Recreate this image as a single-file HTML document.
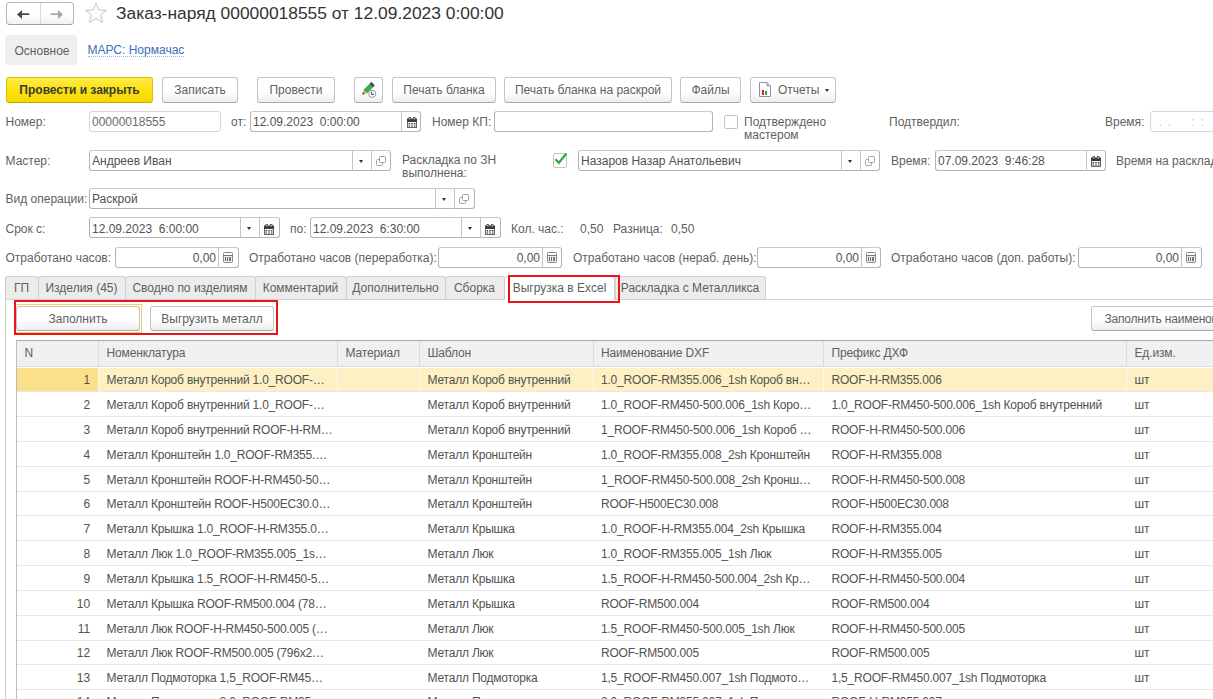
<!DOCTYPE html><html><head><meta charset="utf-8"><style>
html,body{margin:0;padding:0;}
body{width:1213px;height:699px;overflow:hidden;position:relative;background:#fff;font-family:"Liberation Sans",sans-serif;font-size:12px;color:#333;}
.a{position:absolute;box-sizing:border-box;}
.t{position:absolute;white-space:nowrap;line-height:14px;font-size:12px;}
.fld{border:1px solid #b3b3b3;border-top-color:#c8c8c8;border-radius:3px;background:#fff;}
.fldl{border:1px solid #d6d6d6;border-radius:3px;background:#fff;}
.dv{width:1px;background:#c4c4c4;}
.dd{width:0;height:0;border-left:2.5px solid transparent;border-right:2.5px solid transparent;border-top:3px solid #333;}
.btn{border:1px solid #c4c4c4;border-bottom-color:#a9a9a9;border-radius:3px;background:linear-gradient(#fff 0%,#fff 55%,#ededed 100%);}
.tab{border:1px solid #cfcfcf;border-bottom:none;border-radius:3px 3px 0 0;background:#ececec;}
.c{text-align:center;}
</style></head><body>

<div class="a" style="left:6px;top:2px;width:68px;height:23px;border:1px solid #b9b9b9;border-bottom-color:#9f9f9f;border-radius:4px;background:linear-gradient(#fff 0%,#fff 50%,#f1f1f1 100%);"></div>
<div class="a" style="left:40px;top:3px;width:1px;height:21px;background:#d9d9d9;"></div>
<svg class="a" style="left:16px;top:8.5px" width="14" height="11" viewBox="0 0 14 11"><path d="M1 5.5 L6 1 V4.3 H12.5 a0.9 0.9 0 0 1 0 1.8 H6 V10 Z" fill="#4a4a52"/></svg>
<svg class="a" style="left:50px;top:8.5px" width="14" height="11" viewBox="0 0 14 11"><path d="M13 5.5 L8 1 V4.3 H1.5 a0.9 0.9 0 0 0 0 1.8 H8 V10 Z" fill="#a8a8a8"/></svg>
<svg class="a" style="left:84px;top:2.4px" width="24" height="22" viewBox="0 0 24 22"><path d="M12 1 L14.9 8.1 L22.5 8.3 L16.6 13 L18.8 20.5 L12 16.3 L5.2 20.5 L7.4 13 L1.5 8.3 L9.1 8.1 Z" fill="#fff" stroke="#c4c4c4" stroke-width="1"/></svg>
<div class="t" style="left:116px;top:2.4px;line-height:22px;font-size:17.4px;color:#333">Заказ-наряд 00000018555 от 12.09.2023 0:00:00</div>
<div class="a" style="left:5px;top:35px;width:72px;height:30px;background:#efefef;border-radius:4px;"></div>
<div class="t" style="left:14.5px;top:44px;color:#5f5f5f;">Основное</div>
<div class="t" style="left:87.5px;top:44px;color:#3d6eb8;border-bottom:1px dotted #9db8e0;line-height:12px;">МАРС: Нормачас</div>
<div class="a" style="left:6px;top:77px;width:147px;height:26px;border:1px solid #dcc000;border-bottom-color:#c9a800;border-radius:3px;background:linear-gradient(#ffea50 0%,#fde20a 50%,#f6d800 100%);"></div>
<div class="t c" style="left:6px;width:147px;top:83px;font-weight:bold;color:#3a3a3a">Провести и закрыть</div>
<div class="a btn" style="left:162px;top:77px;width:76px;height:26px;"></div>
<div class="t c" style="left:162px;width:76px;top:83px;color:#5f5f5f">Записать</div>
<div class="a btn" style="left:257px;top:77px;width:78px;height:26px;"></div>
<div class="t c" style="left:257px;width:78px;top:83px;color:#5f5f5f">Провести</div>
<div class="a btn" style="left:354px;top:77px;width:29px;height:26px;"></div>
<div class="t c" style="left:354px;width:29px;top:83px;color:#5f5f5f"></div>
<svg class="a" style="left:354px;top:77px" width="30" height="25" viewBox="0 0 30 25"><path d="M8.2 17.6 L9.63 12.63 L13.17 16.17 Z" fill="#e3a860"/><path d="M8.2 17.6 L8.9 15.2 L10.6 16.9 Z" fill="#333"/><path d="M9.63 12.63 L15.27 6.99 L18.81 10.53 L13.17 16.17 Z" fill="#2fb24a"/><path d="M15.27 6.99 L17.39 4.87 L20.93 8.41 L18.81 10.53 Z" fill="#4a4a55"/><circle cx="18.2" cy="16.8" r="3.6" fill="#fff" stroke="#8f9bbd" stroke-width="1"/><path d="M17.6 14.6 V17.4 H20" fill="none" stroke="#444" stroke-width="1"/></svg>
<div class="a btn" style="left:392px;top:77px;width:104px;height:26px;"></div>
<div class="t c" style="left:392px;width:104px;top:83px;color:#5f5f5f">Печать бланка</div>
<div class="a btn" style="left:504px;top:77px;width:168px;height:26px;"></div>
<div class="t c" style="left:504px;width:168px;top:83px;color:#5f5f5f">Печать бланка на раскрой</div>
<div class="a btn" style="left:680px;top:77px;width:61px;height:26px;"></div>
<div class="t c" style="left:680px;width:61px;top:83px;color:#5f5f5f">Файлы</div>
<div class="a btn" style="left:750px;top:77px;width:86px;height:26px;"></div>
<div class="t c" style="left:750px;width:86px;top:83px;color:#5f5f5f"></div>
<div class="t" style="left:778px;top:83px;color:#5f5f5f">Отчеты</div>
<svg class="a" style="left:759px;top:82px" width="12" height="15" viewBox="0 0 12 15"><path d="M0.5 0.5 H8 L11.5 4 V14.5 H0.5 Z" fill="#fff" stroke="#8a8fb0" stroke-width="1"/><path d="M8 0.5 V4 H11.5" fill="#b8c0e0" stroke="#8a8fb0" stroke-width="0.8"/><rect x="3" y="8" width="2" height="5" fill="#e02020"/><rect x="6" y="9" width="2" height="4" fill="#30a040"/></svg>
<div class="a dd" style="left:824.5px;top:89px"></div>
<div class="t" style="left:5.5px;top:115px;color:#5f5f5f;">Номер:</div>
<div class="a fldl" style="left:89px;top:111px;width:132px;height:21px"></div>
<div class="t" style="left:92px;top:115px;color:#6a6a6a;">00000018555</div>
<div class="t" style="left:231px;top:115px;color:#5f5f5f;">от:</div>
<div class="a fld" style="left:250px;top:111px;width:171px;height:21px"></div>
<div class="a dv" style="left:401px;top:111px;height:21px"></div>
<div class="t" style="left:253px;top:115px;color:#525252;">12.09.2023&nbsp; 0:00:00</div>
<svg class="a" style="left:407px;top:116.5px" width="10" height="11" viewBox="0 0 10 11"><rect x="0.5" y="2.5" width="9" height="8" fill="#fff" stroke="#666" stroke-width="1"/><rect x="0" y="1.5" width="10" height="3.5" fill="#3b3b45"/><rect x="2" y="0.3" width="1.6" height="2.6" fill="#fff" stroke="#3b3b45" stroke-width="0.7"/><rect x="6.4" y="0.3" width="1.6" height="2.6" fill="#fff" stroke="#3b3b45" stroke-width="0.7"/><rect x="1.5" y="6" width="1.6" height="1.5" fill="#444"/><rect x="4.2" y="6" width="1.6" height="1.5" fill="#444"/><rect x="6.9" y="6" width="1.6" height="1.5" fill="#444"/><rect x="1.5" y="8.3" width="1.6" height="1.5" fill="#666"/><rect x="4.2" y="8.3" width="1.6" height="1.5" fill="#666"/><rect x="6.9" y="8.3" width="1.6" height="1.5" fill="#666"/></svg>
<div class="t" style="left:432px;top:115px;color:#5f5f5f;">Номер КП:</div>
<div class="a fld" style="left:494px;top:111px;width:219px;height:21px"></div>
<div class="a" style="left:724px;top:115px;width:14px;height:14px;border:1px solid #c4c4c4;border-radius:2px;background:#fff;"></div>
<div class="t" style="left:744px;top:116px;line-height:12.5px;color:#5f5f5f">Подтверждено<br>мастером</div>
<div class="t" style="left:889px;top:115px;color:#5f5f5f;">Подтвердил:</div>
<div class="t" style="left:1105px;top:115px;color:#5f5f5f;">Время:</div>
<div class="a fldl" style="left:1150px;top:111px;width:90px;height:21px"></div>
<div class="t" style="left:1158.5px;top:115px;color:#c4c4c4">.</div>
<div class="t" style="left:1167.5px;top:115px;color:#c4c4c4">.</div>
<div class="t" style="left:1191.5px;top:115px;color:#c4c4c4">:</div>
<div class="t" style="left:1200.5px;top:115px;color:#c4c4c4">:</div>
<div class="t" style="left:5.5px;top:154px;color:#5f5f5f;">Мастер:</div>
<div class="a fld" style="left:89px;top:150px;width:302px;height:21px"></div>
<div class="a dv" style="left:352px;top:150px;height:21px"></div>
<div class="a dv" style="left:371px;top:150px;height:21px"></div>
<div class="t" style="left:92px;top:154px;color:#525252;">Андреев Иван</div>
<div class="a dd" style="left:359.0px;top:159.5px"></div>
<svg class="a" style="left:376px;top:156px" width="10" height="10" viewBox="0 0 10 10"><path d="M3.5 3.5 H1.5 a1 1 0 0 0 -1 1 V8.5 a1 1 0 0 0 1 1 H5.5 a1 1 0 0 0 1 -1 V6.5" fill="none" stroke="#a0a0a0" stroke-width="1"/><rect x="3.5" y="0.5" width="6" height="6" rx="1" fill="#fff" stroke="#a0a0a0" stroke-width="1"/></svg>
<div class="t" style="left:402px;top:154px;line-height:12.5px;color:#5f5f5f">Раскладка по ЗН<br>выполнена:</div>
<div class="a" style="left:553px;top:153px;width:14px;height:15px;border:1px solid #c4c4c4;border-radius:2px;background:#fff;"></div>
<svg class="a" style="left:554px;top:151px" width="14" height="15" viewBox="0 0 14 15"><path d="M1.4 8.2 L4.9 11.7 L12.4 2.6" fill="none" stroke="#2ea84a" stroke-width="2.3"/></svg>
<div class="a fld" style="left:578px;top:150px;width:302px;height:21px"></div>
<div class="a dv" style="left:841px;top:150px;height:21px"></div>
<div class="a dv" style="left:860px;top:150px;height:21px"></div>
<div class="t" style="left:581px;top:154px;color:#525252;">Назаров Назар Анатольевич</div>
<div class="a dd" style="left:848.0px;top:159.5px"></div>
<svg class="a" style="left:865px;top:156px" width="10" height="10" viewBox="0 0 10 10"><path d="M3.5 3.5 H1.5 a1 1 0 0 0 -1 1 V8.5 a1 1 0 0 0 1 1 H5.5 a1 1 0 0 0 1 -1 V6.5" fill="none" stroke="#a0a0a0" stroke-width="1"/><rect x="3.5" y="0.5" width="6" height="6" rx="1" fill="#fff" stroke="#a0a0a0" stroke-width="1"/></svg>
<div class="t" style="left:891px;top:154px;color:#5f5f5f;">Время:</div>
<div class="a fld" style="left:935px;top:150px;width:171px;height:21px"></div>
<div class="a dv" style="left:1086px;top:150px;height:21px"></div>
<div class="t" style="left:938px;top:154px;color:#525252;">07.09.2023&nbsp; 9:46:28</div>
<svg class="a" style="left:1091px;top:155.5px" width="10" height="11" viewBox="0 0 10 11"><rect x="0.5" y="2.5" width="9" height="8" fill="#fff" stroke="#666" stroke-width="1"/><rect x="0" y="1.5" width="10" height="3.5" fill="#3b3b45"/><rect x="2" y="0.3" width="1.6" height="2.6" fill="#fff" stroke="#3b3b45" stroke-width="0.7"/><rect x="6.4" y="0.3" width="1.6" height="2.6" fill="#fff" stroke="#3b3b45" stroke-width="0.7"/><rect x="1.5" y="6" width="1.6" height="1.5" fill="#444"/><rect x="4.2" y="6" width="1.6" height="1.5" fill="#444"/><rect x="6.9" y="6" width="1.6" height="1.5" fill="#444"/><rect x="1.5" y="8.3" width="1.6" height="1.5" fill="#666"/><rect x="4.2" y="8.3" width="1.6" height="1.5" fill="#666"/><rect x="6.9" y="8.3" width="1.6" height="1.5" fill="#666"/></svg>
<div class="t" style="left:1116px;top:154px;color:#5f5f5f;">Время на раскладку:</div>
<div class="t" style="left:5.5px;top:192px;color:#5f5f5f;">Вид операции:</div>
<div class="a fld" style="left:89px;top:188px;width:386px;height:21px"></div>
<div class="a dv" style="left:435px;top:188px;height:21px"></div>
<div class="a dv" style="left:454px;top:188px;height:21px"></div>
<div class="t" style="left:92px;top:192px;color:#525252;">Раскрой</div>
<div class="a dd" style="left:442.0px;top:197.5px"></div>
<svg class="a" style="left:459px;top:194px" width="10" height="10" viewBox="0 0 10 10"><path d="M3.5 3.5 H1.5 a1 1 0 0 0 -1 1 V8.5 a1 1 0 0 0 1 1 H5.5 a1 1 0 0 0 1 -1 V6.5" fill="none" stroke="#a0a0a0" stroke-width="1"/><rect x="3.5" y="0.5" width="6" height="6" rx="1" fill="#fff" stroke="#a0a0a0" stroke-width="1"/></svg>
<div class="t" style="left:5.5px;top:222px;color:#5f5f5f;">Срок с:</div>
<div class="a fld" style="left:89px;top:217px;width:191px;height:21px"></div>
<div class="a dv" style="left:240px;top:217px;height:21px"></div>
<div class="a dv" style="left:259px;top:217px;height:21px"></div>
<div class="t" style="left:92px;top:222px;color:#525252;">12.09.2023&nbsp; 6:00:00</div>
<div class="a dd" style="left:247.0px;top:227px"></div>
<svg class="a" style="left:264px;top:223.5px" width="10" height="11" viewBox="0 0 10 11"><rect x="0.5" y="2.5" width="9" height="8" fill="#fff" stroke="#666" stroke-width="1"/><rect x="0" y="1.5" width="10" height="3.5" fill="#3b3b45"/><rect x="2" y="0.3" width="1.6" height="2.6" fill="#fff" stroke="#3b3b45" stroke-width="0.7"/><rect x="6.4" y="0.3" width="1.6" height="2.6" fill="#fff" stroke="#3b3b45" stroke-width="0.7"/><rect x="1.5" y="6" width="1.6" height="1.5" fill="#444"/><rect x="4.2" y="6" width="1.6" height="1.5" fill="#444"/><rect x="6.9" y="6" width="1.6" height="1.5" fill="#444"/><rect x="1.5" y="8.3" width="1.6" height="1.5" fill="#666"/><rect x="4.2" y="8.3" width="1.6" height="1.5" fill="#666"/><rect x="6.9" y="8.3" width="1.6" height="1.5" fill="#666"/></svg>
<div class="t" style="left:290px;top:222px;color:#5f5f5f;">по:</div>
<div class="a fld" style="left:310px;top:217px;width:191px;height:21px"></div>
<div class="a dv" style="left:461px;top:217px;height:21px"></div>
<div class="a dv" style="left:480px;top:217px;height:21px"></div>
<div class="t" style="left:313px;top:222px;color:#525252;">12.09.2023&nbsp; 6:30:00</div>
<div class="a dd" style="left:468.0px;top:227px"></div>
<svg class="a" style="left:485px;top:223.5px" width="10" height="11" viewBox="0 0 10 11"><rect x="0.5" y="2.5" width="9" height="8" fill="#fff" stroke="#666" stroke-width="1"/><rect x="0" y="1.5" width="10" height="3.5" fill="#3b3b45"/><rect x="2" y="0.3" width="1.6" height="2.6" fill="#fff" stroke="#3b3b45" stroke-width="0.7"/><rect x="6.4" y="0.3" width="1.6" height="2.6" fill="#fff" stroke="#3b3b45" stroke-width="0.7"/><rect x="1.5" y="6" width="1.6" height="1.5" fill="#444"/><rect x="4.2" y="6" width="1.6" height="1.5" fill="#444"/><rect x="6.9" y="6" width="1.6" height="1.5" fill="#444"/><rect x="1.5" y="8.3" width="1.6" height="1.5" fill="#666"/><rect x="4.2" y="8.3" width="1.6" height="1.5" fill="#666"/><rect x="6.9" y="8.3" width="1.6" height="1.5" fill="#666"/></svg>
<div class="t" style="left:511px;top:222px;color:#5f5f5f;">Кол. час.:</div>
<div class="t" style="left:580px;top:222px;color:#5f5f5f;">0,50</div>
<div class="t" style="left:613px;top:222px;color:#5f5f5f;">Разница:</div>
<div class="t" style="left:671px;top:222px;color:#5f5f5f;">0,50</div>
<div class="t" style="left:5.5px;top:251px;color:#5f5f5f;">Отработано часов:</div>
<div class="a fld" style="left:115px;top:247px;width:124px;height:21px"></div>
<div class="a dv" style="left:218px;top:247px;height:21px"></div>
<div class="t" style="right:997px;top:251px;color:#525252">0,00</div>
<svg class="a" style="left:223px;top:252px" width="10" height="11" viewBox="0 0 10 11"><rect x="0.5" y="0.5" width="9" height="10" rx="1" fill="#eee" stroke="#888" stroke-width="1"/><rect x="1" y="1" width="8" height="2" fill="#fff"/><rect x="1" y="3" width="8" height="1" fill="#777"/><rect x="2" y="5" width="1" height="4" fill="#666"/><rect x="4" y="5" width="1" height="4" fill="#666"/><rect x="6" y="5" width="2" height="4" fill="#777"/></svg>
<div class="t" style="left:249px;top:251px;color:#5f5f5f;">Отработано часов (переработка):</div>
<div class="a fld" style="left:438px;top:247px;width:124px;height:21px"></div>
<div class="a dv" style="left:542px;top:247px;height:21px"></div>
<div class="t" style="right:673px;top:251px;color:#525252">0,00</div>
<svg class="a" style="left:547px;top:252px" width="10" height="11" viewBox="0 0 10 11"><rect x="0.5" y="0.5" width="9" height="10" rx="1" fill="#eee" stroke="#888" stroke-width="1"/><rect x="1" y="1" width="8" height="2" fill="#fff"/><rect x="1" y="3" width="8" height="1" fill="#777"/><rect x="2" y="5" width="1" height="4" fill="#666"/><rect x="4" y="5" width="1" height="4" fill="#666"/><rect x="6" y="5" width="2" height="4" fill="#777"/></svg>
<div class="t" style="left:573px;top:251px;color:#5f5f5f;">Отработано часов (нераб. день):</div>
<div class="a fld" style="left:757px;top:247px;width:124px;height:21px"></div>
<div class="a dv" style="left:861px;top:247px;height:21px"></div>
<div class="t" style="right:354px;top:251px;color:#525252">0,00</div>
<svg class="a" style="left:866px;top:252px" width="10" height="11" viewBox="0 0 10 11"><rect x="0.5" y="0.5" width="9" height="10" rx="1" fill="#eee" stroke="#888" stroke-width="1"/><rect x="1" y="1" width="8" height="2" fill="#fff"/><rect x="1" y="3" width="8" height="1" fill="#777"/><rect x="2" y="5" width="1" height="4" fill="#666"/><rect x="4" y="5" width="1" height="4" fill="#666"/><rect x="6" y="5" width="2" height="4" fill="#777"/></svg>
<div class="t" style="left:891px;top:251px;color:#5f5f5f;">Отработано часов (доп. работы):</div>
<div class="a fld" style="left:1078px;top:247px;width:124px;height:21px"></div>
<div class="a dv" style="left:1181px;top:247px;height:21px"></div>
<div class="t" style="right:34px;top:251px;color:#525252">0,00</div>
<svg class="a" style="left:1186px;top:252px" width="10" height="11" viewBox="0 0 10 11"><rect x="0.5" y="0.5" width="9" height="10" rx="1" fill="#eee" stroke="#888" stroke-width="1"/><rect x="1" y="1" width="8" height="2" fill="#fff"/><rect x="1" y="3" width="8" height="1" fill="#777"/><rect x="2" y="5" width="1" height="4" fill="#666"/><rect x="4" y="5" width="1" height="4" fill="#666"/><rect x="6" y="5" width="2" height="4" fill="#777"/></svg>
<div class="a" style="left:5px;top:299px;width:1208px;height:1px;background:#cfcfcf;"></div>
<div class="a tab" style="left:5px;top:276px;width:34px;height:23px;"></div>
<div class="t c" style="left:5px;width:33px;top:281px;color:#5f5f5f">ГП</div>
<div class="a tab" style="left:38px;top:276px;width:88px;height:23px;"></div>
<div class="t c" style="left:38px;width:87px;top:281px;color:#5f5f5f">Изделия (45)</div>
<div class="a tab" style="left:125px;top:276px;width:131px;height:23px;"></div>
<div class="t c" style="left:125px;width:130px;top:281px;color:#5f5f5f">Сводно по изделиям</div>
<div class="a tab" style="left:255px;top:276px;width:92px;height:23px;"></div>
<div class="t c" style="left:255px;width:91px;top:281px;color:#5f5f5f">Комментарий</div>
<div class="a tab" style="left:346px;top:276px;width:100px;height:23px;"></div>
<div class="t c" style="left:346px;width:99px;top:281px;color:#5f5f5f">Дополнительно</div>
<div class="a tab" style="left:445px;top:276px;width:60px;height:23px;"></div>
<div class="t c" style="left:445px;width:59px;top:281px;color:#5f5f5f">Сборка</div>
<div class="a" style="left:504px;top:276px;width:111px;height:24px;border:1px solid #cfcfcf;border-bottom:none;border-radius:3px 3px 0 0;background:#fff;"></div>
<div class="t c" style="left:504px;width:111px;top:281px;color:#5f5f5f">Выгрузка в Excel</div>
<div class="a tab" style="left:615px;top:276px;width:151px;height:23px;"></div>
<div class="t c" style="left:615px;width:150px;top:281px;color:#5f5f5f">Раскладка с Металликса</div>
<div class="a" style="left:5px;top:299px;width:1px;height:400px;background:#cfcfcf;"></div>
<div class="a" style="left:508px;top:275px;width:112px;height:28px;border:2px solid #e8131b;"></div>
<div class="a" style="left:14px;top:304px;width:128px;height:29px;border:1px solid #f3cf6b;"></div>
<div class="a btn" style="left:16px;top:306px;width:124px;height:25px;"></div>
<div class="t c" style="left:16px;width:124px;top:312px;color:#5f5f5f">Заполнить</div>
<div class="a btn" style="left:150px;top:306px;width:124px;height:25px;"></div>
<div class="t c" style="left:150px;width:124px;top:312px;color:#5f5f5f">Выгрузить металл</div>
<div class="a" style="left:14px;top:300px;width:264px;height:35px;border:2px solid #e8131b;"></div>
<div class="a btn" style="left:1091px;top:306px;width:169px;height:25px;"></div>
<div class="t" style="left:1104.5px;top:312px;color:#5f5f5f;letter-spacing:-0.2px">Заполнить наименование</div>
<div class="a" style="left:16px;top:340px;width:1244px;height:1px;background:#a9a9a9;"></div>
<div class="a" style="left:16px;top:340px;width:1px;height:359px;background:#bdbdbd;"></div>
<div class="a" style="left:17px;top:341px;width:1196px;height:25px;background:#f0f0f0;"></div>
<div class="a" style="left:17px;top:366px;width:1196px;height:1px;background:#dcdcdc;"></div>
<div class="t" style="left:24.5px;top:345.5px;color:#5f5f5f;letter-spacing:-0.15px">N</div>
<div class="a" style="left:98px;top:341px;width:1px;height:25px;background:#dcdcdc;"></div>
<div class="t" style="left:106.5px;top:345.5px;color:#5f5f5f;letter-spacing:-0.15px">Номенклатура</div>
<div class="a" style="left:337px;top:341px;width:1px;height:25px;background:#dcdcdc;"></div>
<div class="t" style="left:345.5px;top:345.5px;color:#5f5f5f;letter-spacing:-0.15px">Материал</div>
<div class="a" style="left:419px;top:341px;width:1px;height:25px;background:#dcdcdc;"></div>
<div class="t" style="left:427.5px;top:345.5px;color:#5f5f5f;letter-spacing:-0.15px">Шаблон</div>
<div class="a" style="left:592.5px;top:341px;width:1.0px;height:25px;background:#dcdcdc;"></div>
<div class="t" style="left:601.0px;top:345.5px;color:#5f5f5f;letter-spacing:-0.15px">Наименование DXF</div>
<div class="a" style="left:823px;top:341px;width:1px;height:25px;background:#dcdcdc;"></div>
<div class="t" style="left:831.5px;top:345.5px;color:#5f5f5f;letter-spacing:-0.15px">Префикс ДХФ</div>
<div class="a" style="left:1126px;top:341px;width:1px;height:25px;background:#dcdcdc;"></div>
<div class="t" style="left:1134.5px;top:345.5px;color:#5f5f5f;letter-spacing:-0.15px">Ед.изм.</div>
<div class="a" style="left:17px;top:368px;width:81px;height:23px;background:#fbe08c;"></div>
<div class="a" style="left:98px;top:368px;width:1115px;height:23px;background:#fdf0c4;"></div>
<div class="a" style="left:98px;top:368px;width:1px;height:23px;background:#fffaf0;"></div>
<div class="a" style="left:337px;top:368px;width:1px;height:23px;background:#fffaf0;"></div>
<div class="a" style="left:419px;top:368px;width:1px;height:23px;background:#fffaf0;"></div>
<div class="a" style="left:592.5px;top:368px;width:1.0px;height:23px;background:#fffaf0;"></div>
<div class="a" style="left:823px;top:368px;width:1px;height:23px;background:#fffaf0;"></div>
<div class="a" style="left:1126px;top:368px;width:1px;height:23px;background:#fffaf0;"></div>
<div class="a" style="left:17px;top:391.2px;width:1196px;height:1.0px;background:#e8e8e8;"></div>
<div class="t" style="right:1123px;top:373.2px;color:#525252;letter-spacing:-0.1px">1</div>
<div class="t" style="left:106.5px;top:373.2px;color:#525252;letter-spacing:-0.2px">Металл Короб внутренний 1.0_ROOF-…</div>
<div class="t" style="left:345.5px;top:373.2px;color:#525252;letter-spacing:-0.2px"></div>
<div class="t" style="left:427.5px;top:373.2px;color:#525252;letter-spacing:-0.2px">Металл Короб внутренний</div>
<div class="t" style="left:601.0px;top:373.2px;color:#525252;letter-spacing:-0.2px">1.0_ROOF-RM355.006_1sh Короб вн…</div>
<div class="t" style="left:831.5px;top:373.2px;color:#525252;letter-spacing:-0.2px">ROOF-H-RM355.006</div>
<div class="t" style="left:1134.5px;top:373.2px;color:#525252;letter-spacing:-0.2px">шт</div>
<div class="a" style="left:17px;top:416.03px;width:1196px;height:1.0px;background:#e8e8e8;"></div>
<div class="t" style="right:1123px;top:398.03px;color:#525252;letter-spacing:-0.1px">2</div>
<div class="t" style="left:106.5px;top:398.03px;color:#525252;letter-spacing:-0.2px">Металл Короб внутренний 1.0_ROOF-…</div>
<div class="t" style="left:345.5px;top:398.03px;color:#525252;letter-spacing:-0.2px"></div>
<div class="t" style="left:427.5px;top:398.03px;color:#525252;letter-spacing:-0.2px">Металл Короб внутренний</div>
<div class="t" style="left:601.0px;top:398.03px;color:#525252;letter-spacing:-0.2px">1.0_ROOF-RM450-500.006_1sh Коро…</div>
<div class="t" style="left:831.5px;top:398.03px;color:#525252;letter-spacing:-0.2px">1.0_ROOF-RM450-500.006_1sh Короб внутренний</div>
<div class="t" style="left:1134.5px;top:398.03px;color:#525252;letter-spacing:-0.2px">шт</div>
<div class="a" style="left:17px;top:440.86px;width:1196px;height:1.0px;background:#e8e8e8;"></div>
<div class="t" style="right:1123px;top:422.86px;color:#525252;letter-spacing:-0.1px">3</div>
<div class="t" style="left:106.5px;top:422.86px;color:#525252;letter-spacing:-0.2px">Металл Короб внутренний ROOF-H-RM…</div>
<div class="t" style="left:345.5px;top:422.86px;color:#525252;letter-spacing:-0.2px"></div>
<div class="t" style="left:427.5px;top:422.86px;color:#525252;letter-spacing:-0.2px">Металл Короб внутренний</div>
<div class="t" style="left:601.0px;top:422.86px;color:#525252;letter-spacing:-0.2px">1_ROOF-RM450-500.006_1sh Короб …</div>
<div class="t" style="left:831.5px;top:422.86px;color:#525252;letter-spacing:-0.2px">ROOF-H-RM450-500.006</div>
<div class="t" style="left:1134.5px;top:422.86px;color:#525252;letter-spacing:-0.2px">шт</div>
<div class="a" style="left:17px;top:465.69px;width:1196px;height:1.0px;background:#e8e8e8;"></div>
<div class="t" style="right:1123px;top:447.69px;color:#525252;letter-spacing:-0.1px">4</div>
<div class="t" style="left:106.5px;top:447.69px;color:#525252;letter-spacing:-0.2px">Металл Кронштейн 1.0_ROOF-RM355.…</div>
<div class="t" style="left:345.5px;top:447.69px;color:#525252;letter-spacing:-0.2px"></div>
<div class="t" style="left:427.5px;top:447.69px;color:#525252;letter-spacing:-0.2px">Металл Кронштейн</div>
<div class="t" style="left:601.0px;top:447.69px;color:#525252;letter-spacing:-0.2px">1.0_ROOF-RM355.008_2sh Кронштейн</div>
<div class="t" style="left:831.5px;top:447.69px;color:#525252;letter-spacing:-0.2px">ROOF-H-RM355.008</div>
<div class="t" style="left:1134.5px;top:447.69px;color:#525252;letter-spacing:-0.2px">шт</div>
<div class="a" style="left:17px;top:490.52px;width:1196px;height:1.0px;background:#e8e8e8;"></div>
<div class="t" style="right:1123px;top:472.52px;color:#525252;letter-spacing:-0.1px">5</div>
<div class="t" style="left:106.5px;top:472.52px;color:#525252;letter-spacing:-0.2px">Металл Кронштейн ROOF-H-RM450-50…</div>
<div class="t" style="left:345.5px;top:472.52px;color:#525252;letter-spacing:-0.2px"></div>
<div class="t" style="left:427.5px;top:472.52px;color:#525252;letter-spacing:-0.2px">Металл Кронштейн</div>
<div class="t" style="left:601.0px;top:472.52px;color:#525252;letter-spacing:-0.2px">1_ROOF-RM450-500.008_2sh Кронш…</div>
<div class="t" style="left:831.5px;top:472.52px;color:#525252;letter-spacing:-0.2px">ROOF-H-RM450-500.008</div>
<div class="t" style="left:1134.5px;top:472.52px;color:#525252;letter-spacing:-0.2px">шт</div>
<div class="a" style="left:17px;top:515.3499999999999px;width:1196px;height:1.0px;background:#e8e8e8;"></div>
<div class="t" style="right:1123px;top:497.34999999999997px;color:#525252;letter-spacing:-0.1px">6</div>
<div class="t" style="left:106.5px;top:497.34999999999997px;color:#525252;letter-spacing:-0.2px">Металл Кронштейн ROOF-H500EC30.0…</div>
<div class="t" style="left:345.5px;top:497.34999999999997px;color:#525252;letter-spacing:-0.2px"></div>
<div class="t" style="left:427.5px;top:497.34999999999997px;color:#525252;letter-spacing:-0.2px">Металл Кронштейн</div>
<div class="t" style="left:601.0px;top:497.34999999999997px;color:#525252;letter-spacing:-0.2px">ROOF-H500EC30.008</div>
<div class="t" style="left:831.5px;top:497.34999999999997px;color:#525252;letter-spacing:-0.2px">ROOF-H500EC30.008</div>
<div class="t" style="left:1134.5px;top:497.34999999999997px;color:#525252;letter-spacing:-0.2px">шт</div>
<div class="a" style="left:17px;top:540.18px;width:1196px;height:1.0px;background:#e8e8e8;"></div>
<div class="t" style="right:1123px;top:522.18px;color:#525252;letter-spacing:-0.1px">7</div>
<div class="t" style="left:106.5px;top:522.18px;color:#525252;letter-spacing:-0.2px">Металл Крышка 1.0_ROOF-H-RM355.0…</div>
<div class="t" style="left:345.5px;top:522.18px;color:#525252;letter-spacing:-0.2px"></div>
<div class="t" style="left:427.5px;top:522.18px;color:#525252;letter-spacing:-0.2px">Металл Крышка</div>
<div class="t" style="left:601.0px;top:522.18px;color:#525252;letter-spacing:-0.2px">1.0_ROOF-H-RM355.004_2sh Крышка</div>
<div class="t" style="left:831.5px;top:522.18px;color:#525252;letter-spacing:-0.2px">ROOF-H-RM355.004</div>
<div class="t" style="left:1134.5px;top:522.18px;color:#525252;letter-spacing:-0.2px">шт</div>
<div class="a" style="left:17px;top:565.01px;width:1196px;height:1.0px;background:#e8e8e8;"></div>
<div class="t" style="right:1123px;top:547.01px;color:#525252;letter-spacing:-0.1px">8</div>
<div class="t" style="left:106.5px;top:547.01px;color:#525252;letter-spacing:-0.2px">Металл Люк 1.0_ROOF-RM355.005_1s…</div>
<div class="t" style="left:345.5px;top:547.01px;color:#525252;letter-spacing:-0.2px"></div>
<div class="t" style="left:427.5px;top:547.01px;color:#525252;letter-spacing:-0.2px">Металл Люк</div>
<div class="t" style="left:601.0px;top:547.01px;color:#525252;letter-spacing:-0.2px">1.0_ROOF-RM355.005_1sh Люк</div>
<div class="t" style="left:831.5px;top:547.01px;color:#525252;letter-spacing:-0.2px">ROOF-H-RM355.005</div>
<div class="t" style="left:1134.5px;top:547.01px;color:#525252;letter-spacing:-0.2px">шт</div>
<div class="a" style="left:17px;top:589.8399999999999px;width:1196px;height:1.0px;background:#e8e8e8;"></div>
<div class="t" style="right:1123px;top:571.8399999999999px;color:#525252;letter-spacing:-0.1px">9</div>
<div class="t" style="left:106.5px;top:571.8399999999999px;color:#525252;letter-spacing:-0.2px">Металл Крышка 1.5_ROOF-H-RM450-5…</div>
<div class="t" style="left:345.5px;top:571.8399999999999px;color:#525252;letter-spacing:-0.2px"></div>
<div class="t" style="left:427.5px;top:571.8399999999999px;color:#525252;letter-spacing:-0.2px">Металл Крышка</div>
<div class="t" style="left:601.0px;top:571.8399999999999px;color:#525252;letter-spacing:-0.2px">1.5_ROOF-H-RM450-500.004_2sh Кр…</div>
<div class="t" style="left:831.5px;top:571.8399999999999px;color:#525252;letter-spacing:-0.2px">ROOF-H-RM450-500.004</div>
<div class="t" style="left:1134.5px;top:571.8399999999999px;color:#525252;letter-spacing:-0.2px">шт</div>
<div class="a" style="left:17px;top:614.67px;width:1196px;height:1.0px;background:#e8e8e8;"></div>
<div class="t" style="right:1123px;top:596.67px;color:#525252;letter-spacing:-0.1px">10</div>
<div class="t" style="left:106.5px;top:596.67px;color:#525252;letter-spacing:-0.2px">Металл Крышка ROOF-RM500.004 (78…</div>
<div class="t" style="left:345.5px;top:596.67px;color:#525252;letter-spacing:-0.2px"></div>
<div class="t" style="left:427.5px;top:596.67px;color:#525252;letter-spacing:-0.2px">Металл Крышка</div>
<div class="t" style="left:601.0px;top:596.67px;color:#525252;letter-spacing:-0.2px">ROOF-RM500.004</div>
<div class="t" style="left:831.5px;top:596.67px;color:#525252;letter-spacing:-0.2px">ROOF-RM500.004</div>
<div class="t" style="left:1134.5px;top:596.67px;color:#525252;letter-spacing:-0.2px">шт</div>
<div class="a" style="left:17px;top:639.5px;width:1196px;height:1.0px;background:#e8e8e8;"></div>
<div class="t" style="right:1123px;top:621.5px;color:#525252;letter-spacing:-0.1px">11</div>
<div class="t" style="left:106.5px;top:621.5px;color:#525252;letter-spacing:-0.2px">Металл Люк ROOF-H-RM450-500.005 (…</div>
<div class="t" style="left:345.5px;top:621.5px;color:#525252;letter-spacing:-0.2px"></div>
<div class="t" style="left:427.5px;top:621.5px;color:#525252;letter-spacing:-0.2px">Металл Люк</div>
<div class="t" style="left:601.0px;top:621.5px;color:#525252;letter-spacing:-0.2px">1.5_ROOF-RM450-500.005_1sh Люк</div>
<div class="t" style="left:831.5px;top:621.5px;color:#525252;letter-spacing:-0.2px">ROOF-H-RM450-500.005</div>
<div class="t" style="left:1134.5px;top:621.5px;color:#525252;letter-spacing:-0.2px">шт</div>
<div class="a" style="left:17px;top:664.3299999999999px;width:1196px;height:1.0px;background:#e8e8e8;"></div>
<div class="t" style="right:1123px;top:646.3299999999999px;color:#525252;letter-spacing:-0.1px">12</div>
<div class="t" style="left:106.5px;top:646.3299999999999px;color:#525252;letter-spacing:-0.2px">Металл Люк ROOF-RM500.005 (796x2…</div>
<div class="t" style="left:345.5px;top:646.3299999999999px;color:#525252;letter-spacing:-0.2px"></div>
<div class="t" style="left:427.5px;top:646.3299999999999px;color:#525252;letter-spacing:-0.2px">Металл Люк</div>
<div class="t" style="left:601.0px;top:646.3299999999999px;color:#525252;letter-spacing:-0.2px">ROOF-RM500.005</div>
<div class="t" style="left:831.5px;top:646.3299999999999px;color:#525252;letter-spacing:-0.2px">ROOF-RM500.005</div>
<div class="t" style="left:1134.5px;top:646.3299999999999px;color:#525252;letter-spacing:-0.2px">шт</div>
<div class="a" style="left:17px;top:689.16px;width:1196px;height:1.0px;background:#e8e8e8;"></div>
<div class="t" style="right:1123px;top:671.16px;color:#525252;letter-spacing:-0.1px">13</div>
<div class="t" style="left:106.5px;top:671.16px;color:#525252;letter-spacing:-0.2px">Металл Подмоторка 1,5_ROOF-RM45…</div>
<div class="t" style="left:345.5px;top:671.16px;color:#525252;letter-spacing:-0.2px"></div>
<div class="t" style="left:427.5px;top:671.16px;color:#525252;letter-spacing:-0.2px">Металл Подмоторка</div>
<div class="t" style="left:601.0px;top:671.16px;color:#525252;letter-spacing:-0.2px">1,5_ROOF-RM450.007_1sh Подмото…</div>
<div class="t" style="left:831.5px;top:671.16px;color:#525252;letter-spacing:-0.2px">1,5_ROOF-RM450.007_1sh Подмоторка</div>
<div class="t" style="left:1134.5px;top:671.16px;color:#525252;letter-spacing:-0.2px">шт</div>
<div class="a" style="left:17px;top:713.99px;width:1196px;height:1.0px;background:#e8e8e8;"></div>
<div class="t" style="right:1123px;top:694.99px;color:#525252;letter-spacing:-0.1px">14</div>
<div class="t" style="left:106.5px;top:694.99px;color:#525252;letter-spacing:-0.2px">Металл Подмоторка 2,0_ROOF-RM35…</div>
<div class="t" style="left:345.5px;top:694.99px;color:#525252;letter-spacing:-0.2px"></div>
<div class="t" style="left:427.5px;top:694.99px;color:#525252;letter-spacing:-0.2px">Металл Подмоторка</div>
<div class="t" style="left:601.0px;top:694.99px;color:#525252;letter-spacing:-0.2px">2,0_ROOF-RM355.007_1sh Подмото…</div>
<div class="t" style="left:831.5px;top:694.99px;color:#525252;letter-spacing:-0.2px">ROOF-H-RM355.007</div>
<div class="t" style="left:1134.5px;top:694.99px;color:#525252;letter-spacing:-0.2px">шт</div>
</body></html>
